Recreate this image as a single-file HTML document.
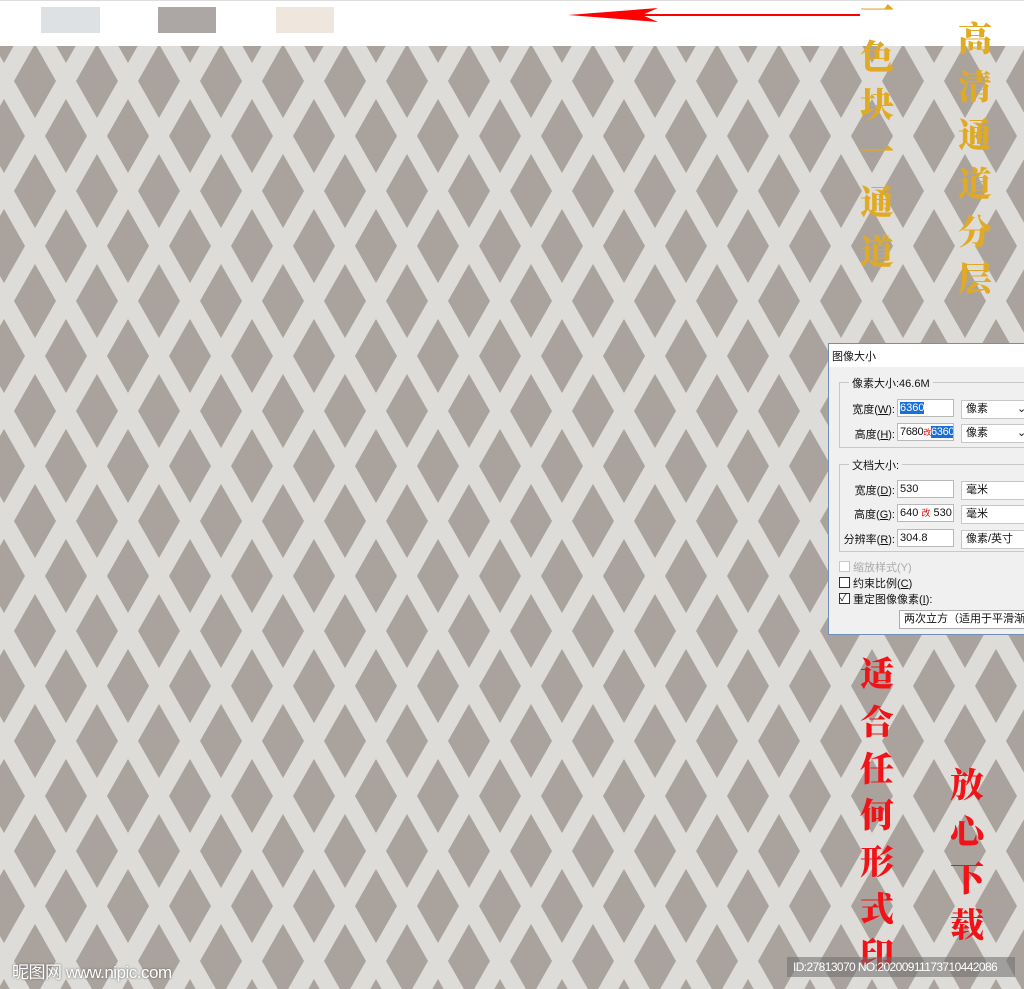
<!DOCTYPE html>
<html><head><meta charset="utf-8"><style>
*{margin:0;padding:0;box-sizing:border-box}
body{width:1024px;height:989px;overflow:hidden;position:relative;background:#fff;font-family:"Liberation Sans","Noto Sans CJK SC",sans-serif}
.a{position:absolute;white-space:nowrap}
.cal{position:absolute;font-family:"Noto Serif CJK SC","Noto Sans CJK SC",serif;font-weight:900;font-size:34px;line-height:1;width:40px;text-align:center}
.y{color:#e1aa24}.r{color:#f01418}
.dlg{font-size:11px;color:#111}
.in,.sel{position:absolute;white-space:nowrap;overflow:hidden;background:#fff;font-size:11px}
.in{border:1px solid #b9b9b9;height:18px;line-height:16px;padding-left:2px}
.sel{border:1px solid #c6c6c6;height:19px;line-height:17px;padding-left:4px}
.hl{background:#1a6fd6;color:#fff}
.gb{position:absolute;border:1px solid #c8c8c8}
.gl{position:absolute;background:#f0f0f0;padding:0 3px;font-size:11px;white-space:nowrap}
.lb{position:absolute;font-size:11px;text-align:right;width:60px;white-space:nowrap}
.cb{position:absolute;width:11px;height:11px;border:1px solid #333;background:#fff}
</style></head><body>
<div class="a" style="left:0;top:0;width:1024px;height:1px;background:#ddd"></div>
<div class="a" style="left:41px;top:7px;width:59px;height:26px;background:#dde1e3"></div>
<div class="a" style="left:158px;top:7px;width:58px;height:26px;background:#aca7a4"></div>
<div class="a" style="left:276px;top:7px;width:58px;height:26px;background:#efe7dd"></div>
<svg class="a" style="left:560px;top:5px" width="300" height="22"><line x1="80" y1="10" x2="300" y2="10" stroke="#f00" stroke-width="2"/><path d="M8 10 L98 3 L82 10 L98 17 Z" fill="#f00"/></svg>
<svg class="a" style="left:0;top:46px" width="1024" height="943">
<defs><pattern id="p" patternUnits="userSpaceOnUse" width="62" height="110" x="4" y="-20">
<rect width="62" height="110" fill="#dddcd8"/>
<g fill="#aaa39d">
<path d="M31 18 L52 55 L31 92 L10 55Z"/>
<path d="M0 -37 L21 0 L0 37 L-21 0Z"/><path d="M62 -37 L83 0 L62 37 L41 0Z"/>
<path d="M0 73 L21 110 L0 147 L-21 110Z"/><path d="M62 73 L83 110 L62 147 L41 110Z"/>
</g></pattern></defs>
<rect width="1024" height="943" fill="url(#p)"/>
</svg>
<div class="cal y" style="left:857px;top:-8px">一</div>
<div class="cal y" style="left:857px;top:38px">色</div>
<div class="cal y" style="left:857px;top:86px">块</div>
<div class="cal y" style="left:857px;top:133px">一</div>
<div class="cal y" style="left:857px;top:183px">通</div>
<div class="cal y" style="left:857px;top:233px">道</div>
<div class="cal y" style="left:955px;top:20px">高</div>
<div class="cal y" style="left:955px;top:68px">清</div>
<div class="cal y" style="left:955px;top:116px">通</div>
<div class="cal y" style="left:955px;top:165px">道</div>
<div class="cal y" style="left:955px;top:213px">分</div>
<div class="cal y" style="left:955px;top:260px">层</div>
<div class="cal r" style="left:857px;top:655px">适</div>
<div class="cal r" style="left:857px;top:703px">合</div>
<div class="cal r" style="left:857px;top:750px">任</div>
<div class="cal r" style="left:857px;top:796px">何</div>
<div class="cal r" style="left:857px;top:843px">形</div>
<div class="cal r" style="left:857px;top:890px">式</div>
<div class="cal r" style="left:857px;top:936px">印</div>
<div class="cal r" style="left:947px;top:766px">放</div>
<div class="cal r" style="left:947px;top:813px">心</div>
<div class="cal r" style="left:947px;top:860px">下</div>
<div class="cal r" style="left:947px;top:906px">载</div>
<div class="a dlg" style="left:828px;top:343px;width:196px;height:292px;background:#f0f0f0;border:1px solid #6f8fb8;border-right:none">
<div class="a" style="left:0;top:0;width:196px;height:23px;background:#fff"></div>
<div class="a" style="left:3px;top:4px">图像大小</div>
<div class="gb" style="left:10px;top:38px;width:190px;height:66px"></div>
<div class="gl" style="left:20px;top:31px">像素大小:46.6M</div>
<div class="lb" style="left:6px;top:57px">宽度(<u>W</u>):</div>
<div class="in" style="left:68px;top:55px;width:57px"><span class="hl">6360</span></div>
<div class="sel" style="left:132px;top:56px;width:70px">像素 <span style="position:absolute;left:55px">⌄</span></div>
<div class="lb" style="left:6px;top:82px">高度(<u>H</u>):</div>
<div class="in" style="left:68px;top:79px;width:57px;letter-spacing:-0.3px">7680<span style="color:#e00;font-size:8px">改</span><span class="hl">6360</span></div>
<div class="sel" style="left:132px;top:80px;width:70px">像素 <span style="position:absolute;left:55px">⌄</span></div>
<div class="gb" style="left:10px;top:120px;width:190px;height:88px"></div>
<div class="gl" style="left:20px;top:113px">文档大小:</div>
<div class="lb" style="left:6px;top:138px">宽度(<u>D</u>):</div>
<div class="in" style="left:68px;top:136px;width:57px">530</div>
<div class="sel" style="left:132px;top:137px;width:70px">毫米</div>
<div class="lb" style="left:6px;top:162px">高度(<u>G</u>):</div>
<div class="in" style="left:68px;top:160px;width:57px">640 <span style="color:#e00;font-size:9px">改</span> 530</div>
<div class="sel" style="left:132px;top:161px;width:70px">毫米</div>
<div class="lb" style="left:6px;top:187px">分辨率(<u>R</u>):</div>
<div class="in" style="left:68px;top:185px;width:57px">304.8</div>
<div class="sel" style="left:132px;top:186px;width:70px">像素/英寸</div>
<div class="cb" style="left:10px;top:217px;border-color:#c8c8c8"></div>
<div class="a" style="left:24px;top:215px;color:#aaa">缩放样式(Y)</div>
<div class="cb" style="left:10px;top:233px"></div>
<div class="a" style="left:24px;top:231px">约束比例(<u>C</u>)</div>
<div class="cb" style="left:10px;top:249px;font-size:10px;line-height:9px">✓</div>
<div class="a" style="left:24px;top:247px">重定图像像素(<u>I</u>):</div>
<div class="sel" style="left:70px;top:266px;width:130px;border-color:#adadad">两次立方（适用于平滑渐变</div>
</div>
<div class="a" style="left:12px;top:958px;color:#fff;font-size:17px;text-shadow:0 0 2px #555;letter-spacing:-0.5px">昵图网 www.nipic.com</div>
<div class="a" style="left:787px;top:957px;width:228px;height:20px;background:rgba(110,110,110,0.55);color:#fff;font-size:12px;line-height:20px;padding-left:6px;letter-spacing:-0.6px;overflow:hidden">ID:27813070 NO:20200911173710442086</div>
</body></html>
